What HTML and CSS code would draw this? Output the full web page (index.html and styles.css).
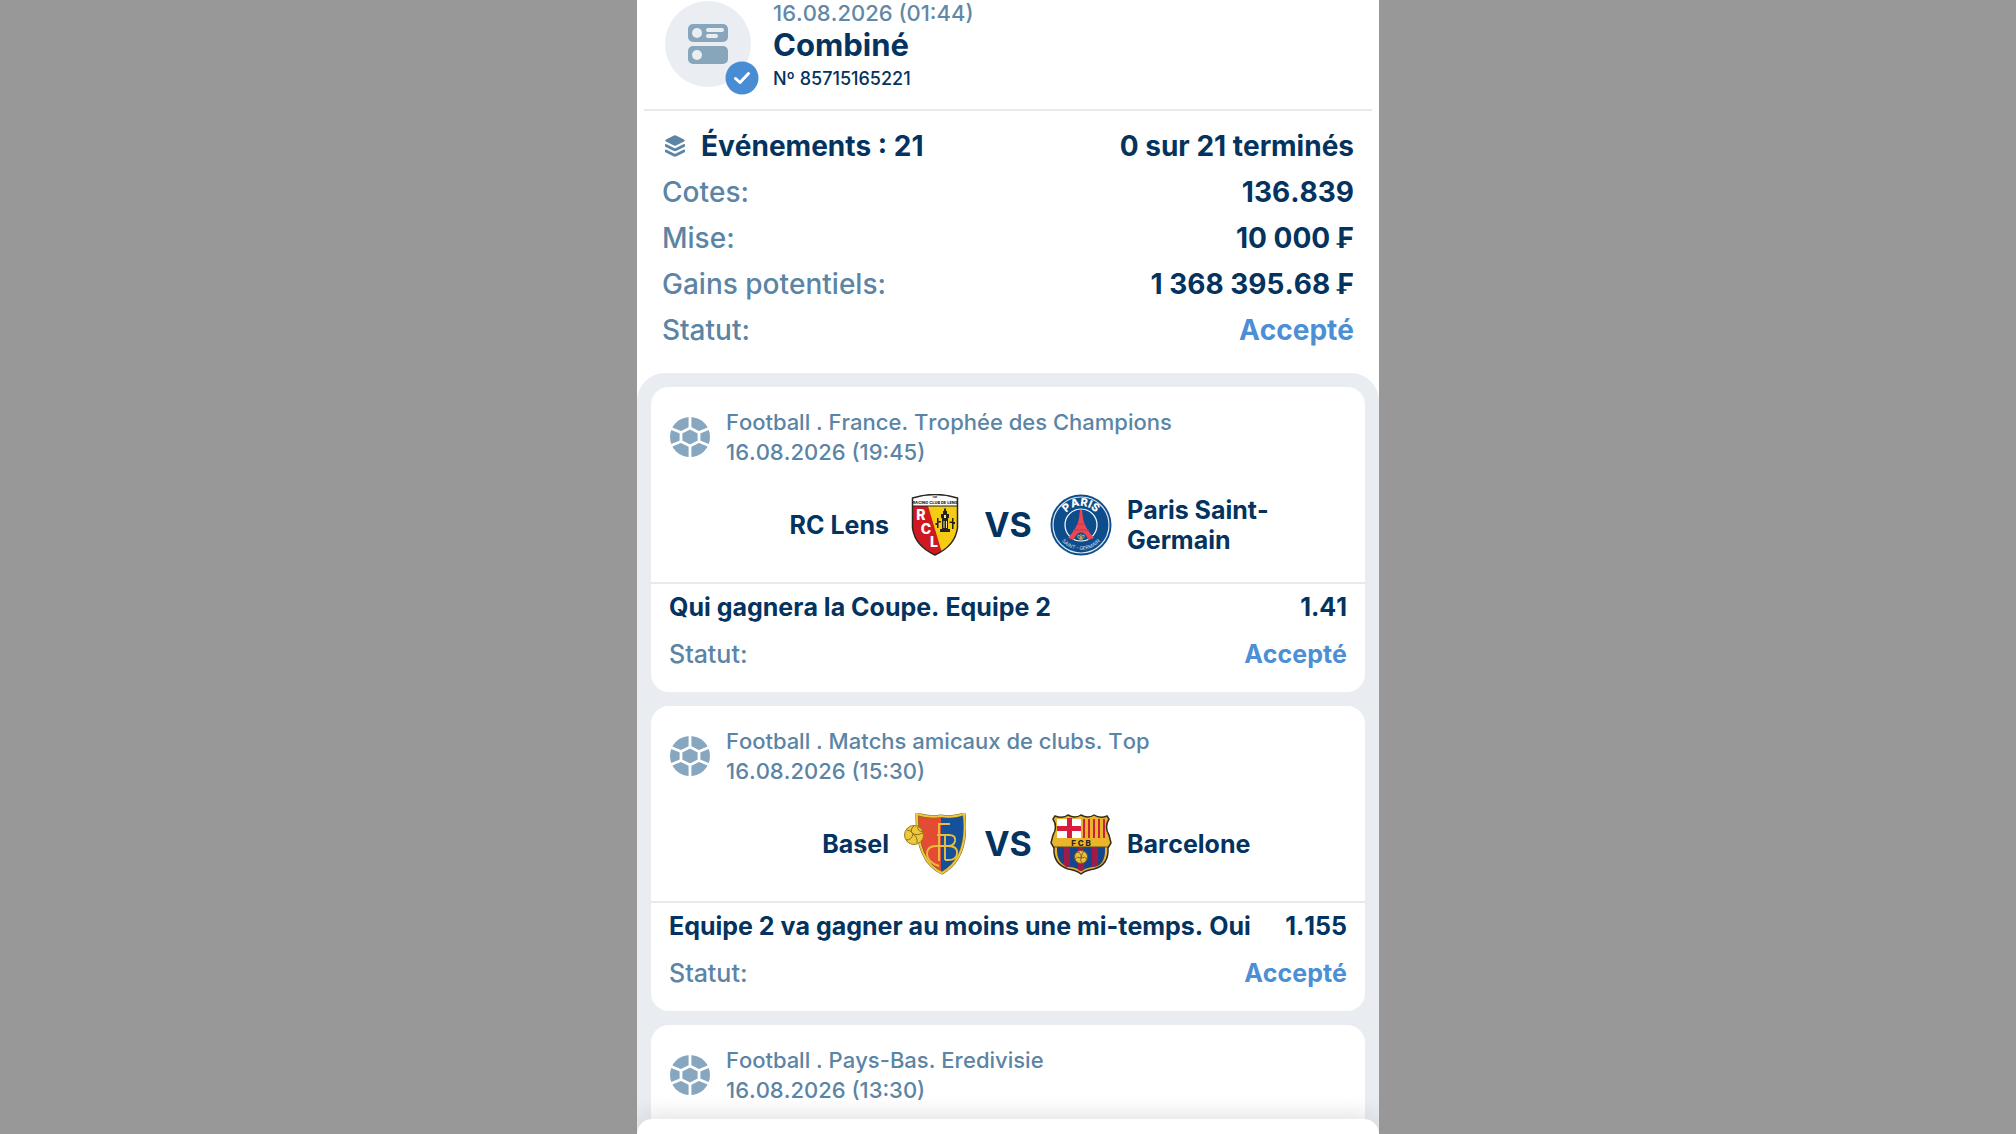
FILE: index.html
```html
<!DOCTYPE html>
<html lang="fr">
<head>
<meta charset="utf-8">
<meta name="viewport" content="width=device-width, initial-scale=1">
<title>Combiné</title>
<link rel="stylesheet" href="styles.css">
</head>
<body>
<svg class="sprite" aria-hidden="true">
  <symbol id="ball" viewBox="0 0 40 40">
    <circle cx="20" cy="20" r="20" fill="#87a6bf"/>
    <g fill="none" stroke="#fff" stroke-width="2.800">
      <path d="M20 11l9 4.500v9l-9 4.500-9-4.500v-9z"/>
      <path d="M20 11V-1M29 15.500l12-5M29 24.500l12 5M20 29v12M11 24.500l-12 5M11 15.500l-12-5"/>
    </g>
  </symbol>
</svg>
<main class="panel">
  <header class="head">
    <div class="avatar">
      <svg class="avatar-icon" viewBox="0 0 40 40" aria-hidden="true">
        <rect y="0" width="40" height="18" rx="5" fill="#87a6bb"/>
        <rect y="22" width="40" height="18" rx="5" fill="#87a6bb"/>
        <g fill="#eaeef3">
          <circle cx="9" cy="9" r="5"/>
          <circle cx="9" cy="31" r="5"/>
          <rect x="18" y="4" width="18" height="4" rx="2"/>
          <rect x="18" y="10" width="12" height="4" rx="2"/>
        </g>
      </svg>
      <svg class="badge" viewBox="0 0 34 34" aria-hidden="true">
        <circle cx="17" cy="17" r="16.500" fill="#488cd4"/>
        <path d="M10.500 17.500l4.500 4 8.500-9" fill="none" stroke="#fff" stroke-width="3" stroke-linecap="round" stroke-linejoin="round"/>
      </svg>
    </div>
    <div>
      <time class="date">16.08.2026 (01:44)</time>
      <h1 class="title">Combiné</h1>
      <p class="number">Nº 85715165221</p>
    </div>
  </header>

  <dl class="summary">
    <div class="row strong">
      <dt>
        <svg class="layers" viewBox="0 0 20 22" aria-hidden="true">
          <path d="M9 .5q1-.5 2 0l8 4q1.400 1 0 2l-8 4q-1 .5-2 0l-8-4q-1.400-1 0-2z" fill="#5b84a5"/>
          <path d="M1 10.500l8 4q1 .5 2 0l8-4M1 16l8 4q1 .5 2 0l8-4" fill="none" stroke="#5b84a5" stroke-width="2.800" stroke-linecap="round"/>
        </svg>
        Événements : 21
      </dt>
      <dd>0 sur 21 terminés</dd>
    </div>
    <div class="row"><dt>Cotes:</dt><dd>136.839</dd></div>
    <div class="row"><dt>Mise:</dt><dd>10 000 ₣</dd></div>
    <div class="row"><dt>Gains potentiels:</dt><dd>1 368 395.68 ₣</dd></div>
    <div class="row"><dt>Statut:</dt><dd class="accepted">Accepté</dd></div>
  </dl>

  <section class="events">
    <article class="card">
      <div class="event">
        <svg class="ball" aria-hidden="true"><use href="#ball"/></svg>
        <p>Football . France. Trophée des Champions<br><time>16.08.2026 (19:45)</time></p>
      </div>
      <div class="teams">
        <span class="team home">RC Lens</span>
        <svg class="crest" viewBox="0 0 62 62" role="img" aria-label="RC Lens">
          <clipPath id="lens"><path d="M8.500 4Q31-3 53.500 4V34Q51 52 31 61 11 52 8.500 34z"/></clipPath>
          <g clip-path="url(#lens)">
            <rect width="62" height="62" fill="#f6cb13"/>
            <path d="M8 12h16l15 50H8z" fill="#cf1820"/>
            <rect width="62" height="12" fill="#fff"/>
            <path d="M8 12h46" stroke="#222" stroke-width="1"/>
          </g>
          <path d="M8.500 4Q31-3 53.500 4V34Q51 52 31 61 11 52 8.500 34z" fill="none" stroke="#2b2720" stroke-width="1.500"/>
          <text x="31" y="4" class="crest-text" font-size="2">1906</text>
          <text x="31" y="10" class="crest-text" font-size="4">RACING CLUB DE LENS</text>
          <g class="crest-text white" font-size="14">
            <text x="17" y="26">R</text><text x="22" y="40">C</text><text x="30" y="53">L</text>
          </g>
          <g fill="#25231d">
            <path d="M39 17h4v3h2v4h-1v11h2v3H36v-3h2V24h-1v-4h2z"/>
            <path d="M40 14.500h2v3h-2zM33 24h1.500v3H37v1.500h-2.500V34H33v-3h-1.500v-2H33zM48 24h1.500v4H51v2h-1.500v5H48v-6h-2.500v-1.500H48z"/>
          </g>
          <path d="M40 21h2v3h-2zM39.500 27h1v7h-1zM42 27h1v7h-1z" fill="#eee3a1"/>
        </svg>
        <b class="versus">VS</b>
        <svg class="crest" viewBox="0 0 62 62" role="img" aria-label="Paris Saint-Germain">
          <circle cx="31" cy="31" r="30.500" fill="#0d4d8c"/>
          <circle cx="31" cy="31" r="28" fill="none" stroke="#dce7ef" stroke-width="1.200"/>
          <circle cx="31" cy="31" r="16" fill="none" stroke="#fff" stroke-width="1.200"/>
          <path d="M30 16h2l1 8c1 7 5 13 11 20l-6 2c-2-10-12-10-14 0l-6-2c6-7 10-13 11-20z" fill="#ed4650"/>
          <path d="M27 30h8M23 36h16" stroke="#b7395c" stroke-width="1"/>
          <path d="M31 40v7M29 45h4M31 44q-4 1-3-3 2 0 3 3 1-3 3-3 1 4-3 3" fill="none" stroke="#c4ad65" stroke-width="1"/>
          <path id="paris-arc" d="M12 31a19 19 0 0 1 38 0" fill="none"/>
          <path id="germain-arc" d="M6 31a25 25 0 0 0 50 0" fill="none"/>
          <text class="crest-text white" font-size="11"><textPath href="#paris-arc" startOffset="50%">PARIS</textPath></text>
          <text class="crest-text pale" font-size="5"><textPath href="#germain-arc" startOffset="50%">SAINT - GERMAIN</textPath></text>
        </svg>
        <span class="team">Paris Saint-Germain</span>
      </div>
      <dl class="bet">
        <div class="row strong"><dt>Qui gagnera la Coupe. Equipe 2</dt><dd>1.41</dd></div>
        <div class="row"><dt>Statut:</dt><dd class="accepted">Accepté</dd></div>
      </dl>
    </article>

    <article class="card">
      <div class="event">
        <svg class="ball" aria-hidden="true"><use href="#ball"/></svg>
        <p>Football . Matchs amicaux de clubs. Top<br><time>16.08.2026 (15:30)</time></p>
      </div>
      <div class="teams">
        <span class="team home">Basel</span>
        <svg class="crest" viewBox="0 0 62 62" role="img" aria-label="Basel">
          <clipPath id="basel"><path d="M13 1q12 4 24 2 12 2 23-2 5 44-22 59Q12 48 13 1z"/></clipPath>
          <g clip-path="url(#basel)">
            <rect width="38" height="62" fill="#e34c32"/>
            <rect x="37" width="25" height="62" fill="#15509a"/>
          </g>
          <path d="M13 1q12 4 24 2 12 2 23-2 5 44-22 59Q12 48 13 1z" fill="none" stroke="#7b6620" stroke-width="3"/>
          <path d="M13 1q12 4 24 2 12 2 23-2 5 44-22 59Q12 48 13 1z" fill="none" stroke="#efc83c" stroke-width="2"/>
          <path d="M46 11H35v37M33 22h13M41 47V22h4q7 0 6 6-1 5-7 5 10 0 9 8-1 6-8 6h-4M44 33H32q-9 0-9 8 0 8 12 12" fill="none" stroke="#e8be3e" stroke-width="1.900"/>
          <circle cx="10" cy="22" r="9.500" fill="#efc83c" stroke="#9b7b20" stroke-width="1"/>
          <path d="M10 13q-5 4-1 8 5 2 10-1M9 21q-1 6-7 6M3 17q4 0 6 4M9 21q5 3 4 9M14 14q-1 4 5 5" fill="none" stroke="#8c7022" stroke-width="1"/>
        </svg>
        <b class="versus">VS</b>
        <svg class="crest" viewBox="0 0 62 62" role="img" aria-label="Barcelone">
          <clipPath id="barca"><path d="M5 3q8 3 13-1 7 4 13 0 7 4 13 0 6 4 13 1l2 3q-5 8 0 16l2 8-3 5q1 17-14 21-8 1-13 5-5-4-13-5Q3 51 4 35l-3-5 2-8q5-8 0-16z"/></clipPath>
          <g clip-path="url(#barca)">
            <rect width="62" height="62" fill="#eab52d"/>
            <path d="M7 6h24v19H7z" fill="#fff"/>
            <path d="M17 5h5v20h-5zM7 13h24v5H7z" fill="#d81c3f"/>
            <path d="M33 6h2v19h-2zM38 6h2v19h-2zM43 6h2v19h-2zM48 6h2v19h-2zM53 6h2v19h-2z" fill="#cb2336"/>
            <path d="M7 34h48q1 20-13 20-6 1-11 4-6-4-12-4Q6 51 7 34z" fill="#17458c"/>
            <path d="M14 34h6v20h-4l-2-2zM28 34h6v23l-3 1-3-1zM42 34h6v18l-6 2z" fill="#a01c48"/>
            <path d="M4 34h54" stroke="#5c4b24" stroke-width="1"/>
          </g>
          <path d="M5 3q8 3 13-1 7 4 13 0 7 4 13 0 6 4 13 1l2 3q-5 8 0 16l2 8-3 5q1 17-14 21-8 1-13 5-5-4-13-5Q3 51 4 35l-3-5 2-8q5-8 0-16z" fill="none" stroke="#342d1d" stroke-width="1.500"/>
          <text x="31" y="32.500" class="crest-text" font-size="8">F C B</text>
          <circle cx="31" cy="44" r="6.500" fill="#edbd3c" stroke="#715825" stroke-width="1"/>
          <path d="M27 39q5 1 4 6 4-2 6 1M31 45q-4-2-6 1M31 45q-1 3 1 5M34 38q-2 2-3 7" fill="none" stroke="#80642a" stroke-width="1"/>
        </svg>
        <span class="team">Barcelone</span>
      </div>
      <dl class="bet">
        <div class="row strong"><dt>Equipe 2 va gagner au moins une mi-temps. Oui</dt><dd>1.155</dd></div>
        <div class="row"><dt>Statut:</dt><dd class="accepted">Accepté</dd></div>
      </dl>
    </article>

    <article class="card last">
      <div class="event">
        <svg class="ball" aria-hidden="true"><use href="#ball"/></svg>
        <p>Football . Pays-Bas. Eredivisie<br><time>16.08.2026 (13:30)</time></p>
      </div>
    </article>
  </section>
  <div class="sheet"></div>
</main>
</body>
</html>
```
FILE: styles.css
```css
* {
  box-sizing: border-box;
  margin: 0;
}

body {
  display: flex;
  justify-content: center;
  background: #989898;
  color: #03335e;
  font-family: Inter, "Liberation Sans", sans-serif;
  font-kerning: none;
}

.sprite {
  position: absolute;
  width: 0;
  height: 0;
}

.panel {
  position: relative;
  display: flex;
  flex-direction: column;
  width: 100%;
  max-width: 742px;
  height: 100vh;
  overflow: hidden;
  background: #fff;
}

.head {
  display: flex;
  gap: 22px;
  margin: 0 7px;
  padding: 0 21px 15px;
  border-bottom: 2px solid #e6eaef;
}

.avatar {
  position: relative;
  display: grid;
  place-items: center;
  width: 86px;
  height: 86px;
  margin-top: 1px;
  border-radius: 50%;
  background: #eaeef3;
}

.avatar-icon {
  width: 40px;
  height: 40px;
}

.badge {
  position: absolute;
  right: -8px;
  bottom: -8px;
  width: 34px;
  height: 34px;
}

.date {
  display: block;
  color: #6288a7;
  font-size: 22px;
  font-weight: 500;
  line-height: 26px;
}

.title {
  font-size: 31px;
  font-weight: 700;
  line-height: 38px;
}

.number {
  font-size: 18px;
  font-weight: 500;
  line-height: 30px;
}

.summary {
  padding: 12px 25px 20px;
  font-size: 28px;
  line-height: 46px;
}

.row {
  display: flex;
  justify-content: space-between;
}

dt {
  display: flex;
  align-items: center;
  color: #5b84a5;
  font-weight: 500;
}

dd {
  font-weight: 700;
}

.strong dt {
  color: inherit;
  font-weight: 700;
}

.row .accepted {
  color: #4c8fd5;
}

.layers {
  width: 20px;
  height: 22px;
  margin: 0 16px 0 3px;
}

.events {
  display: flex;
  flex: 1 0 auto;
  flex-direction: column;
  gap: 14px;
  padding: 14px 14px 0;
  border-radius: 28px 28px 0 0;
  background: #e9edf2;
}

.card {
  padding: 20px 0 14px;
  border-radius: 18px;
  background: #fff;
}

.last {
  flex: 1;
  border-radius: 18px 18px 0 0;
}

.event {
  display: flex;
  align-items: center;
  gap: 16px;
  padding: 0 19px;
  color: #5b84a5;
  font-size: 22px;
  font-weight: 500;
  line-height: 30px;
}

.ball {
  flex: none;
  width: 40px;
  height: 40px;
}

.teams {
  display: grid;
  grid-template-columns: 1fr 62px 54px 62px 1fr;
  align-items: center;
  column-gap: 15px;
  height: 115px;
  padding: 0 18px;
  border-bottom: 2px solid #e6e9ed;
  box-sizing: content-box;
}

.team {
  max-width: 180px;
  font-size: 25px;
  font-weight: 700;
  line-height: 30px;
}

.home {
  justify-self: end;
}

.versus {
  font-size: 34px;
  line-height: 40px;
  text-align: center;
}

.crest {
  width: 62px;
  height: 62px;
}

.crest-text {
  fill: #292620;
  font-weight: 800;
  text-anchor: middle;
}

.white {
  fill: #fff;
}

.pale {
  fill: #b9d0e2;
  font-weight: 500;
}

.bet {
  padding: 0 18px;
  font-size: 25px;
  line-height: 47px;
}

.sheet {
  position: absolute;
  inset: auto 0 0;
  height: 15px;
  border-radius: 20px 20px 0 0;
  background: #fff;
  box-shadow: 0 0 24px rgba(0, 0, 0, 0.2);
}
```
